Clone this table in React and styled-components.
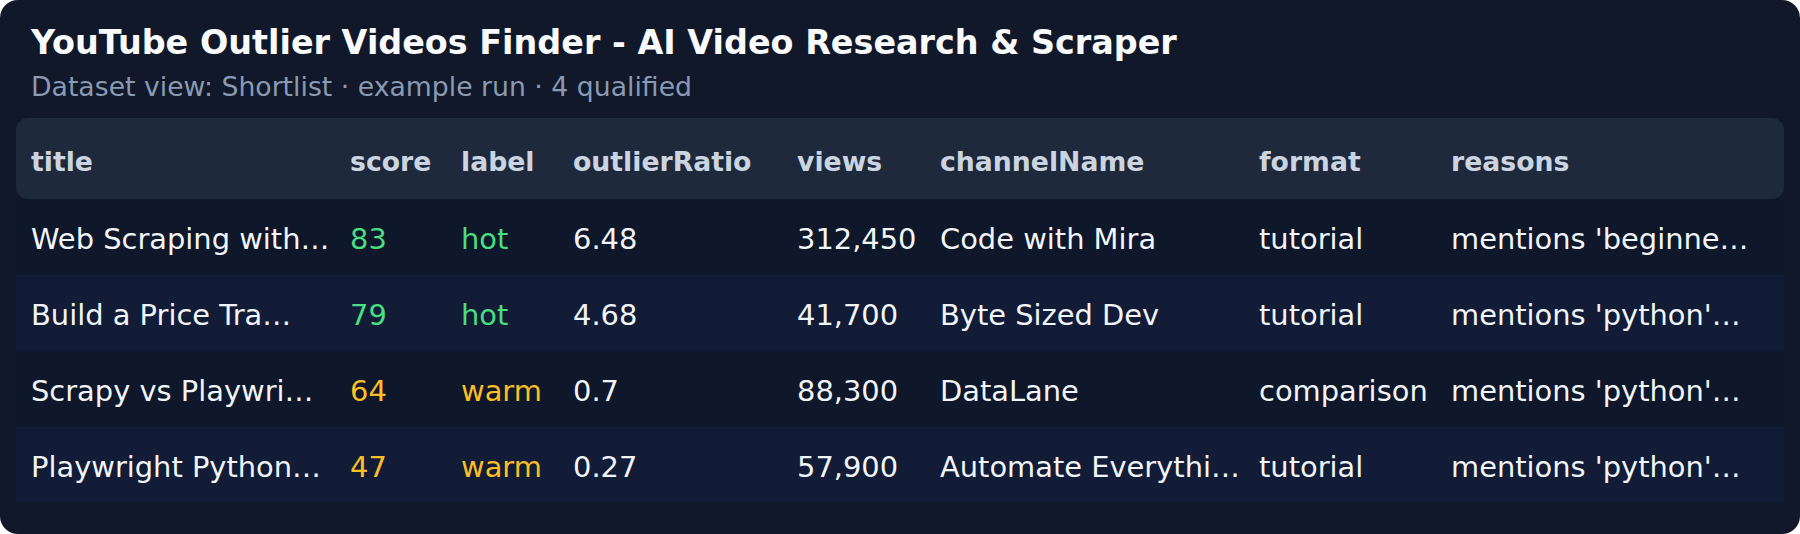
import React from 'react'
import styled, { createGlobalStyle } from 'styled-components'

const columns = [
	{ key: 'title', width: 319 },
	{ key: 'score', width: 111 },
	{ key: 'label', width: 112 },
	{ key: 'outlierRatio', width: 224 },
	{ key: 'views', width: 143 },
	{ key: 'channelName', width: 319 },
	{ key: 'format', width: 192 },
	{ key: 'reasons', width: 348 },
]

const rows = [
	{ title: 'Web Scraping with…', score: 83, label: 'hot', outlierRatio: '6.48', views: '312,450', channelName: 'Code with Mira', format: 'tutorial', reasons: "mentions 'beginne…" },
	{ title: 'Build a Price Tra…', score: 79, label: 'hot', outlierRatio: '4.68', views: '41,700', channelName: 'Byte Sized Dev', format: 'tutorial', reasons: "mentions 'python'…" },
	{ title: 'Scrapy vs Playwri…', score: 64, label: 'warm', outlierRatio: '0.7', views: '88,300', channelName: 'DataLane', format: 'comparison', reasons: "mentions 'python'…" },
	{ title: 'Playwright Python…', score: 47, label: 'warm', outlierRatio: '0.27', views: '57,900', channelName: 'Automate Everythi…', format: 'tutorial', reasons: "mentions 'python'…" },
]

export default function App () {
	return (
		<>
			<GlobalStyle />
			<Card>
				<Heading>
					<Title>YouTube Outlier Videos Finder - AI Video Research &amp; Scraper</Title>
					<Subtitle>Dataset view: Shortlist · example run · 4 qualified</Subtitle>
				</Heading>
				<Table>
					<colgroup>
						{columns.map(col => <Col key={col.key} $width={col.width} />)}
					</colgroup>
					<thead>
						<tr>
							{columns.map(col => <HeadCell key={col.key}>{col.key}</HeadCell>)}
						</tr>
					</thead>
					<tbody>
						{rows.map((row, i) =>
							<Row key={i} $striped={i % 2 === 1}>
								{columns.map(col =>
									<Cell key={col.key} $tone={(col.key === 'score' || col.key === 'label') ? row.label : null}>
										{row[col.key]}
									</Cell>
								)}
							</Row>
						)}
					</tbody>
				</Table>
			</Card>
		</>
	)
}

const GlobalStyle = createGlobalStyle`
	body {
		margin: 0;
		background: #ffffff;
		font-family: "DejaVu Sans", "Liberation Sans", sans-serif;
	}
`

const Card = styled.div`
	width: 1800px;
	height: 534px;
	box-sizing: border-box;
	background: #101829;
	border-radius: 18px;
	padding: 21px 16px 31px;
	display: flex;
	flex-direction: column;
`

const Heading = styled.div`
	padding: 0 15px;
	height: 100px;
	display: flex;
	flex-direction: column;
`

const Title = styled.h1`
	margin: 0;
	font-size: 33.4px;
	line-height: 44px;
	font-weight: 700;
	color: #f8fafc;
`

const Subtitle = styled.div`
	margin-top: 5px;
	font-size: 26.7px;
	line-height: 34px;
	color: #8a9ab3;
`

const Table = styled.table`
	width: 100%;
	table-layout: fixed;
	border-collapse: separate;
	border-spacing: 0;
`

const Col = styled.col`
	width: ${p => p.$width}px;
`

const HeadCell = styled.th`
	box-sizing: border-box;
	height: 81px;
	padding: 5px 15px 0;
	text-align: left;
	font-size: 26.7px;
	font-weight: 700;
	color: #cbd5e1;
	background: #1e293b;
	white-space: nowrap;

	&:first-child { border-radius: 12px 0 0 12px; }
	&:last-child { border-radius: 0 12px 12px 0; }
`

const Row = styled.tr`
	background: ${p => p.$striped ? '#121c37' : '#0f172a'};
`

const Cell = styled.td`
	box-sizing: border-box;
	height: 76px;
	padding: 3px 15px 0;
	font-size: 28.9px;
	white-space: nowrap;
	overflow: hidden;
	color: ${p => p.$tone === 'hot' ? '#4ade80' : p.$tone === 'warm' ? '#fbbf24' : '#f1f5f9'};
`
